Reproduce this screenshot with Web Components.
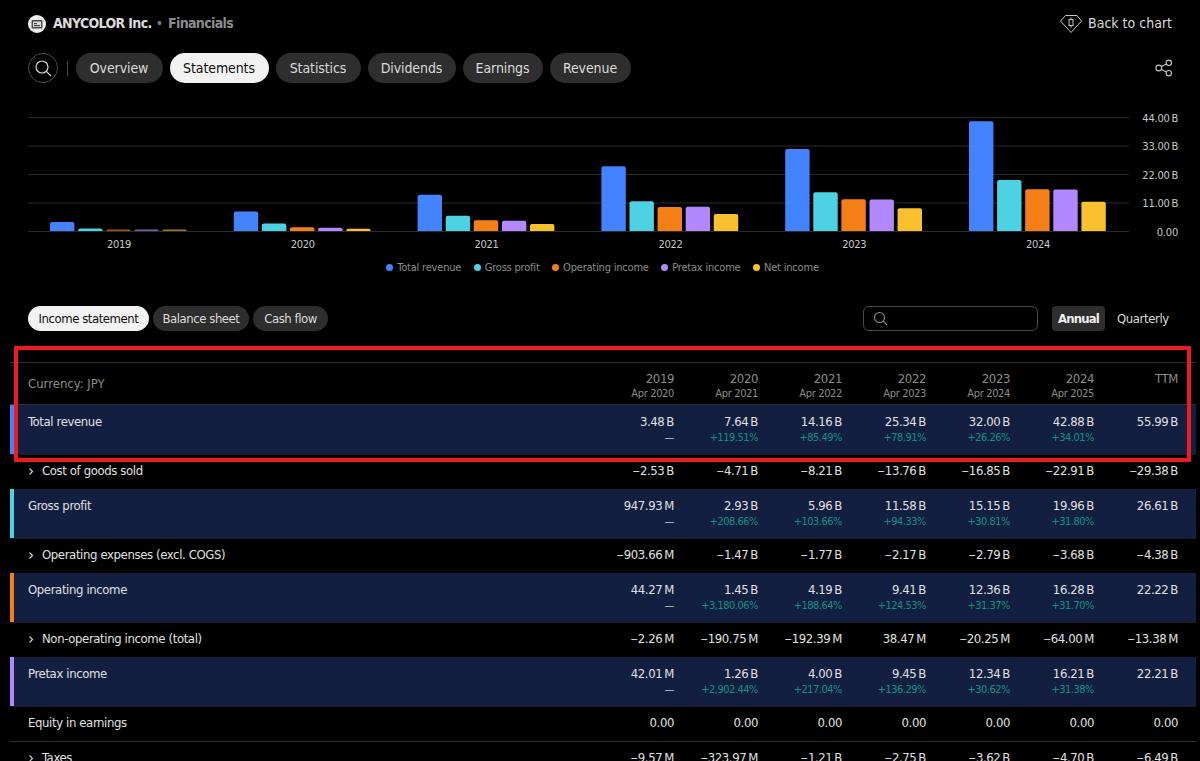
<!DOCTYPE html>
<html lang="en">
<head>
<meta charset="utf-8">
<title>ANYCOLOR Inc. Financials</title>
<style>
html,body{margin:0;padding:0;background:#000;height:761px;overflow:hidden}
body{position:relative;font-family:"DejaVu Sans",Tahoma,sans-serif;font-stretch:condensed;color:#e0e0e0}
</style>
</head>
<body>
<fin-header></fin-header>
<fin-nav></fin-nav>
<fin-chart></fin-chart>
<fin-toolbar></fin-toolbar>
<fin-table></fin-table>
<fin-mark></fin-mark>
<script>
const NS='\u202f';
function shadow(el,html){el.attachShadow({mode:'open'}).innerHTML=html;}

class FinPill extends HTMLElement{
  connectedCallback(){
    const small=this.hasAttribute('small');
    const w=this.getAttribute('w');
    shadow(this,`<style>
      :host{display:inline-flex;align-items:center;justify-content:center;box-sizing:border-box;height:${small?25:30}px;width:${w}px;border-radius:${small?13:15}px;background:#2e2e2e;color:#dbdbdb;font-size:${small?13:14}px;white-space:nowrap;letter-spacing:${small?-.45:-.1}px;flex:none}
      :host([active]){background:#f2f2f2;color:#0f0f0f}
    </style><slot></slot>`);
  }
}
customElements.define('fin-pill',FinPill);

class FinHeader extends HTMLElement{
  connectedCallback(){
    shadow(this,`<style>
      :host{display:flex;align-items:center;height:18px;padding:15px 28px 0;font-size:14px}
      .logo{width:18px;height:18px;margin-right:7px;flex:none}
      .t{margin-top:-2px;letter-spacing:-.65px;font-weight:700}
      b{color:#dbdbdb;font-weight:700}
      .dot{color:#787b86;margin:-2px 5px 0 4px}
      .fin{color:#8c8c8c}
      .back{margin-left:auto;display:flex;align-items:center;gap:6px;color:#dbdbdb;font-size:14px}
      .back span{margin-top:-2px}
      svg{display:block}
    </style>
    <svg class="logo" viewBox="0 0 18 18"><circle cx="9" cy="9" r="9" fill="#efefef"/><rect x="3.5" y="5" width="11" height="8.5" rx="1" fill="#4a4a4a"/><rect x="5" y="6.5" width="8" height="5.5" fill="#dcdcdc"/><rect x="6" y="8" width="3" height="1.2" fill="#444"/><rect x="6" y="10" width="6" height="1.2" fill="#444"/></svg>
    <b class="t">ANYCOLOR Inc.</b><span class="dot">•</span><span class="t fin">Financials</span>
    <span class="back">
      <svg width="22" height="18" viewBox="0 0 22 18" fill="none" stroke="#c8c8c8" stroke-width="1"><path d="M5.5 .5H17L21.5 6 11 17.5 .5 6Z"/><rect x="9" y="4.5" width="4" height="6"/><path d="M11 2.5V4.5M11 10.5V12.5"/></svg>
      <span>Back to chart</span>
    </span>`);
  }
}
customElements.define('fin-header',FinHeader);

class FinNav extends HTMLElement{
  connectedCallback(){
    shadow(this,`<style>
      :host{display:flex;align-items:center;margin-top:20px;padding:0 28px;height:30px;gap:7px}
      .s{width:30px;height:30px;box-sizing:border-box;border:1px solid #4a4a4a;border-radius:50%;display:flex;align-items:center;justify-content:center;flex:none}
      .d{width:1px;height:15px;background:#4a4a4a;margin:0 1px 0 1.5px;flex:none}
      .share{margin-left:auto;margin-right:-1px;display:block}
    </style>
    <span class="s"><svg width="18" height="18" viewBox="0 0 18 18" fill="none" stroke="#dbdbdb" stroke-width="1.2"><circle cx="8" cy="8" r="6"/><path d="M12.3 12.3L17 17"/></svg></span>
    <span class="d"></span>
    <fin-pill w="87">Overview</fin-pill><fin-pill w="99" active>Statements</fin-pill><fin-pill w="85">Statistics</fin-pill><fin-pill w="88">Dividends</fin-pill><fin-pill w="80">Earnings</fin-pill><fin-pill w="81">Revenue</fin-pill>
    <svg class="share" width="18" height="18" viewBox="0 0 18 18" fill="none" stroke="#c4c4c4" stroke-width="1.1"><circle cx="3.8" cy="9" r="2.9"/><circle cx="13.8" cy="3.8" r="2.7"/><circle cx="13.8" cy="14.2" r="2.7"/><path d="M6.4 7.6L11.4 5.1M6.4 10.4L11.4 12.9"/></svg>`);
  }
}
customElements.define('fin-nav',FinNav);

class FinChart extends HTMLElement{
  connectedCallback(){
    const cols=['#4383ff','#4dd2e4','#f57f17','#b388ff','#fbc02d'];
    const dim=['#4383ff','#4dd2e4','#a4550f','#7a5cb0','#a07c1d'];
    const data=[
      [3.48,.948,.12,.12,.12],
      [7.64,2.93,1.45,1.26,.92],
      [14.16,5.96,4.19,4.00,2.75],
      [25.34,11.58,9.41,9.45,6.60],
      [32.00,15.15,12.36,12.34,8.90],
      [42.88,19.96,16.28,16.21,11.45]
    ];
    const years=['2019','2020','2021','2022','2023','2024'];
    let s='';
    [['44.00'+NS+'B',117.5],['33.00'+NS+'B',146],['22.00'+NS+'B',174.5],['11.00'+NS+'B',203],['0.00',231.5]].forEach(([t,y])=>{
      s+=`<line x1="28" x2="1129" y1="${y-110}" y2="${y-110}" stroke="#2b2b2b"/>`;
      s+=`<text x="1178" y="${y-110+4}" text-anchor="end" fill="#c8c8c8" font-size="11" letter-spacing="-.2">${t}</text>`;
    });
    data.forEach((g,i)=>{
      const x0=50+i*183.8;
      g.forEach((v,j)=>{
        const x=x0+j*28.1,h=Math.max(v*2.56,1.5),w=24.4;
        const c=h<2?dim[j]:cols[j],r=Math.min(2,h);
        s+=`<path fill="${c}" d="M${x} ${231-110}v${-h+r}q0 ${-r} ${r} ${-r}h${w-2*r}q${r} 0 ${r} ${r}v${h-r}z"/>`;
      });
      s+=`<text x="${119+i*183.8}" y="${244-110+4}" text-anchor="middle" fill="#c8c8c8" font-size="11" letter-spacing="-.3">${years[i]}</text>`;
    });
    const leg=[['Total revenue',0],['Gross profit',1],['Operating income',2],['Pretax income',3],['Net income',4]];
    shadow(this,`<style>
      :host{display:block;margin-top:27px}
      svg{display:block;font-family:inherit}
      .legend{display:flex;justify-content:center;gap:12.5px;font-size:11px;letter-spacing:-.2px;color:#8c8c8c;margin-top:10px;height:14px;align-items:center;padding-left:5px}
      .i{display:flex;align-items:center;gap:4px}
      .i i{width:7px;height:7px;border-radius:50%;display:block}
    </style>
    <svg width="1200" height="140" viewBox="0 0 1200 140">${s}</svg>
    <div class="legend">${leg.map(([t,j])=>`<span class="i"><i style="background:${cols[j]}"></i>${t}</span>`).join('')}</div>`);
  }
}
customElements.define('fin-chart',FinChart);

class FinToolbar extends HTMLElement{
  connectedCallback(){
    shadow(this,`<style>
      :host{display:flex;align-items:center;height:25px;margin-top:32px;padding:0 31px 0 28px;gap:4px}
      .search{margin-left:auto;width:175px;height:25px;box-sizing:border-box;border:1px solid #4a4a4a;border-radius:6px;display:flex;align-items:center;padding-left:9px}
      .a{margin-left:10px;width:53px;height:25px;border-radius:4px;background:#2e2e2e;color:#f0f0f0;font-weight:700;font-size:13px;letter-spacing:-.8px;display:flex;align-items:center;justify-content:center}
      .q{margin-left:8px;font-size:13px;letter-spacing:-.4px;color:#dbdbdb;width:52px;text-align:left}
    </style>
    <fin-pill small w="121" active>Income statement</fin-pill><fin-pill small w="96">Balance sheet</fin-pill><fin-pill small w="75">Cash flow</fin-pill>
    <span class="search"><svg width="15" height="15" viewBox="0 0 15 15" fill="none" stroke="#8c8c8c" stroke-width="1.1"><circle cx="6.5" cy="6.5" r="5"/><path d="M10.2 10.2L14 14"/></svg></span>
    <span class="a">Annual</span><span class="q">Quarterly</span>`);
  }
}
customElements.define('fin-toolbar',FinToolbar);

class FinRow extends HTMLElement{
  set data(d){
    const hi=!!d.color;
    const fmt=v=>v.replace('\u2212','<span class="m">\u2212</span>');
    const cells=d.v.map((v,i)=>{
      const p=d.p?d.p[i]:null;
      return `<div class="c"><div class="v">${fmt(v)}</div>${p?`<div class="p ${p==='—'?'n':''}">${p}</div>`:''}</div>`;
    }).join('');
    shadow(this,`<style>
      :host{display:flex;box-sizing:border-box;height:${hi?50:(d.line?35:34)}px;padding:${hi?8:7}px 18px 0 18px;font-size:13px;letter-spacing:-.38px;color:#e0e0e0;position:relative;border-bottom:1px solid ${hi?'#1c1c1c':(d.line?'#2e2e2e':'transparent')};background:${hi?'#131f40':'transparent'}}
      .bar{position:absolute;left:0;top:0;bottom:0;width:4px;background:${d.color||'none'}}
      .l{flex:1;line-height:18px;white-space:nowrap;display:flex;align-items:flex-start}
      .chev{width:14px;height:18px;display:block;flex:none}
      .c{width:84px;text-align:right;flex:none}
      .v{line-height:18px;white-space:nowrap}
      .m{font-size:10.5px}
      .p{line-height:14px;font-size:11px;letter-spacing:-.5px;color:#0b9482;white-space:nowrap}
      .p.n{color:#c8c8c8}
    </style>
    ${hi?'<span class="bar"></span>':''}
    <div class="l">${d.exp?'<svg class="chev" viewBox="0 0 14 18" fill="none" stroke="#dbdbdb" stroke-width="1.1"><path d="M1.5 6.5L4.5 9.5 1.5 12.5"/></svg>':''}<span>${d.name}</span></div>${cells}`);
  }
}
customElements.define('fin-row',FinRow);

class FinTable extends HTMLElement{
  connectedCallback(){
    const B=a=>a.map(x=>x+NS+'B');
    const m='\u2212';
    const rows=[
      {name:'Total revenue',color:'#4383ff',v:B(['3.48','7.64','14.16','25.34','32.00','42.88','55.99']),p:['—','+119.51%','+85.49%','+78.91%','+26.26%','+34.01%',null]},
      {name:'Cost of goods sold',exp:1,v:B([m+'2.53',m+'4.71',m+'8.21',m+'13.76',m+'16.85',m+'22.91',m+'29.38'])},
      {name:'Gross profit',color:'#4dd2e4',v:['947.93'+NS+'M',...B(['2.93','5.96','11.58','15.15','19.96','26.61'])],p:['—','+208.66%','+103.66%','+94.33%','+30.81%','+31.80%',null]},
      {name:'Operating expenses (excl. COGS)',exp:1,v:[m+'903.66'+NS+'M',...B([m+'1.47',m+'1.77',m+'2.17',m+'2.79',m+'3.68',m+'4.38'])]},
      {name:'Operating income',color:'#f57f17',v:['44.27'+NS+'M',...B(['1.45','4.19','9.41','12.36','16.28','22.22'])],p:['—','+3,180.06%','+188.64%','+124.53%','+31.37%','+31.70%',null]},
      {name:'Non-operating income (total)',exp:1,v:[m+'2.26',m+'190.75',m+'192.39','38.47',m+'20.25',m+'64.00',m+'13.38'].map(x=>x+NS+'M')},
      {name:'Pretax income',color:'#b388ff',v:['42.01'+NS+'M',...B(['1.26','4.00','9.45','12.34','16.21','22.21'])],p:['—','+2,902.44%','+217.04%','+136.29%','+30.62%','+31.38%',null]},
      {name:'Equity in earnings',line:1,v:Array(7).fill('0.00')},
      {name:'Taxes',exp:1,v:[m+'9.57'+NS+'M',m+'323.97'+NS+'M',...B([m+'1.21',m+'2.75',m+'3.62',m+'4.70',m+'6.49'])]}
    ];
    const hd=[['2019','Apr 2020'],['2020','Apr 2021'],['2021','Apr 2022'],['2022','Apr 2023'],['2023','Apr 2024'],['2024','Apr 2025'],['TTM','']];
    shadow(this,`<style>
      :host{display:block;margin:31px 4px 0 10px}
      .h{display:flex;box-sizing:border-box;height:43px;border-top:1px solid #2e2e2e;border-bottom:1px solid #2e2e2e;padding:8px 18px 0;color:#8c8c8c;font-size:13px}
      .cur{flex:1;line-height:26px}
      .c{width:84px;text-align:right;flex:none}
      .y{line-height:16px;letter-spacing:-.4px}
      .d{line-height:14px;font-size:11px;letter-spacing:-.35px}
    </style>
    <div class="h"><div class="cur">Currency: JPY</div>${hd.map(([a,b])=>`<div class="c"><div class="y">${a}</div><div class="d">${b}</div></div>`).join('')}</div>
    <div id="b"></div>`);
    const b=this.shadowRoot.getElementById('b');
    rows.forEach(r=>{const e=document.createElement('fin-row');b.appendChild(e);e.data=r;});
  }
}
customElements.define('fin-table',FinTable);

class FinMark extends HTMLElement{
  connectedCallback(){
    shadow(this,`<style>:host{position:absolute;left:14px;top:346px;width:1177px;height:116px;box-sizing:border-box;border:4px solid #ed1c24;pointer-events:none}</style>`);
  }
}
customElements.define('fin-mark',FinMark);
</script>
</body>
</html>
